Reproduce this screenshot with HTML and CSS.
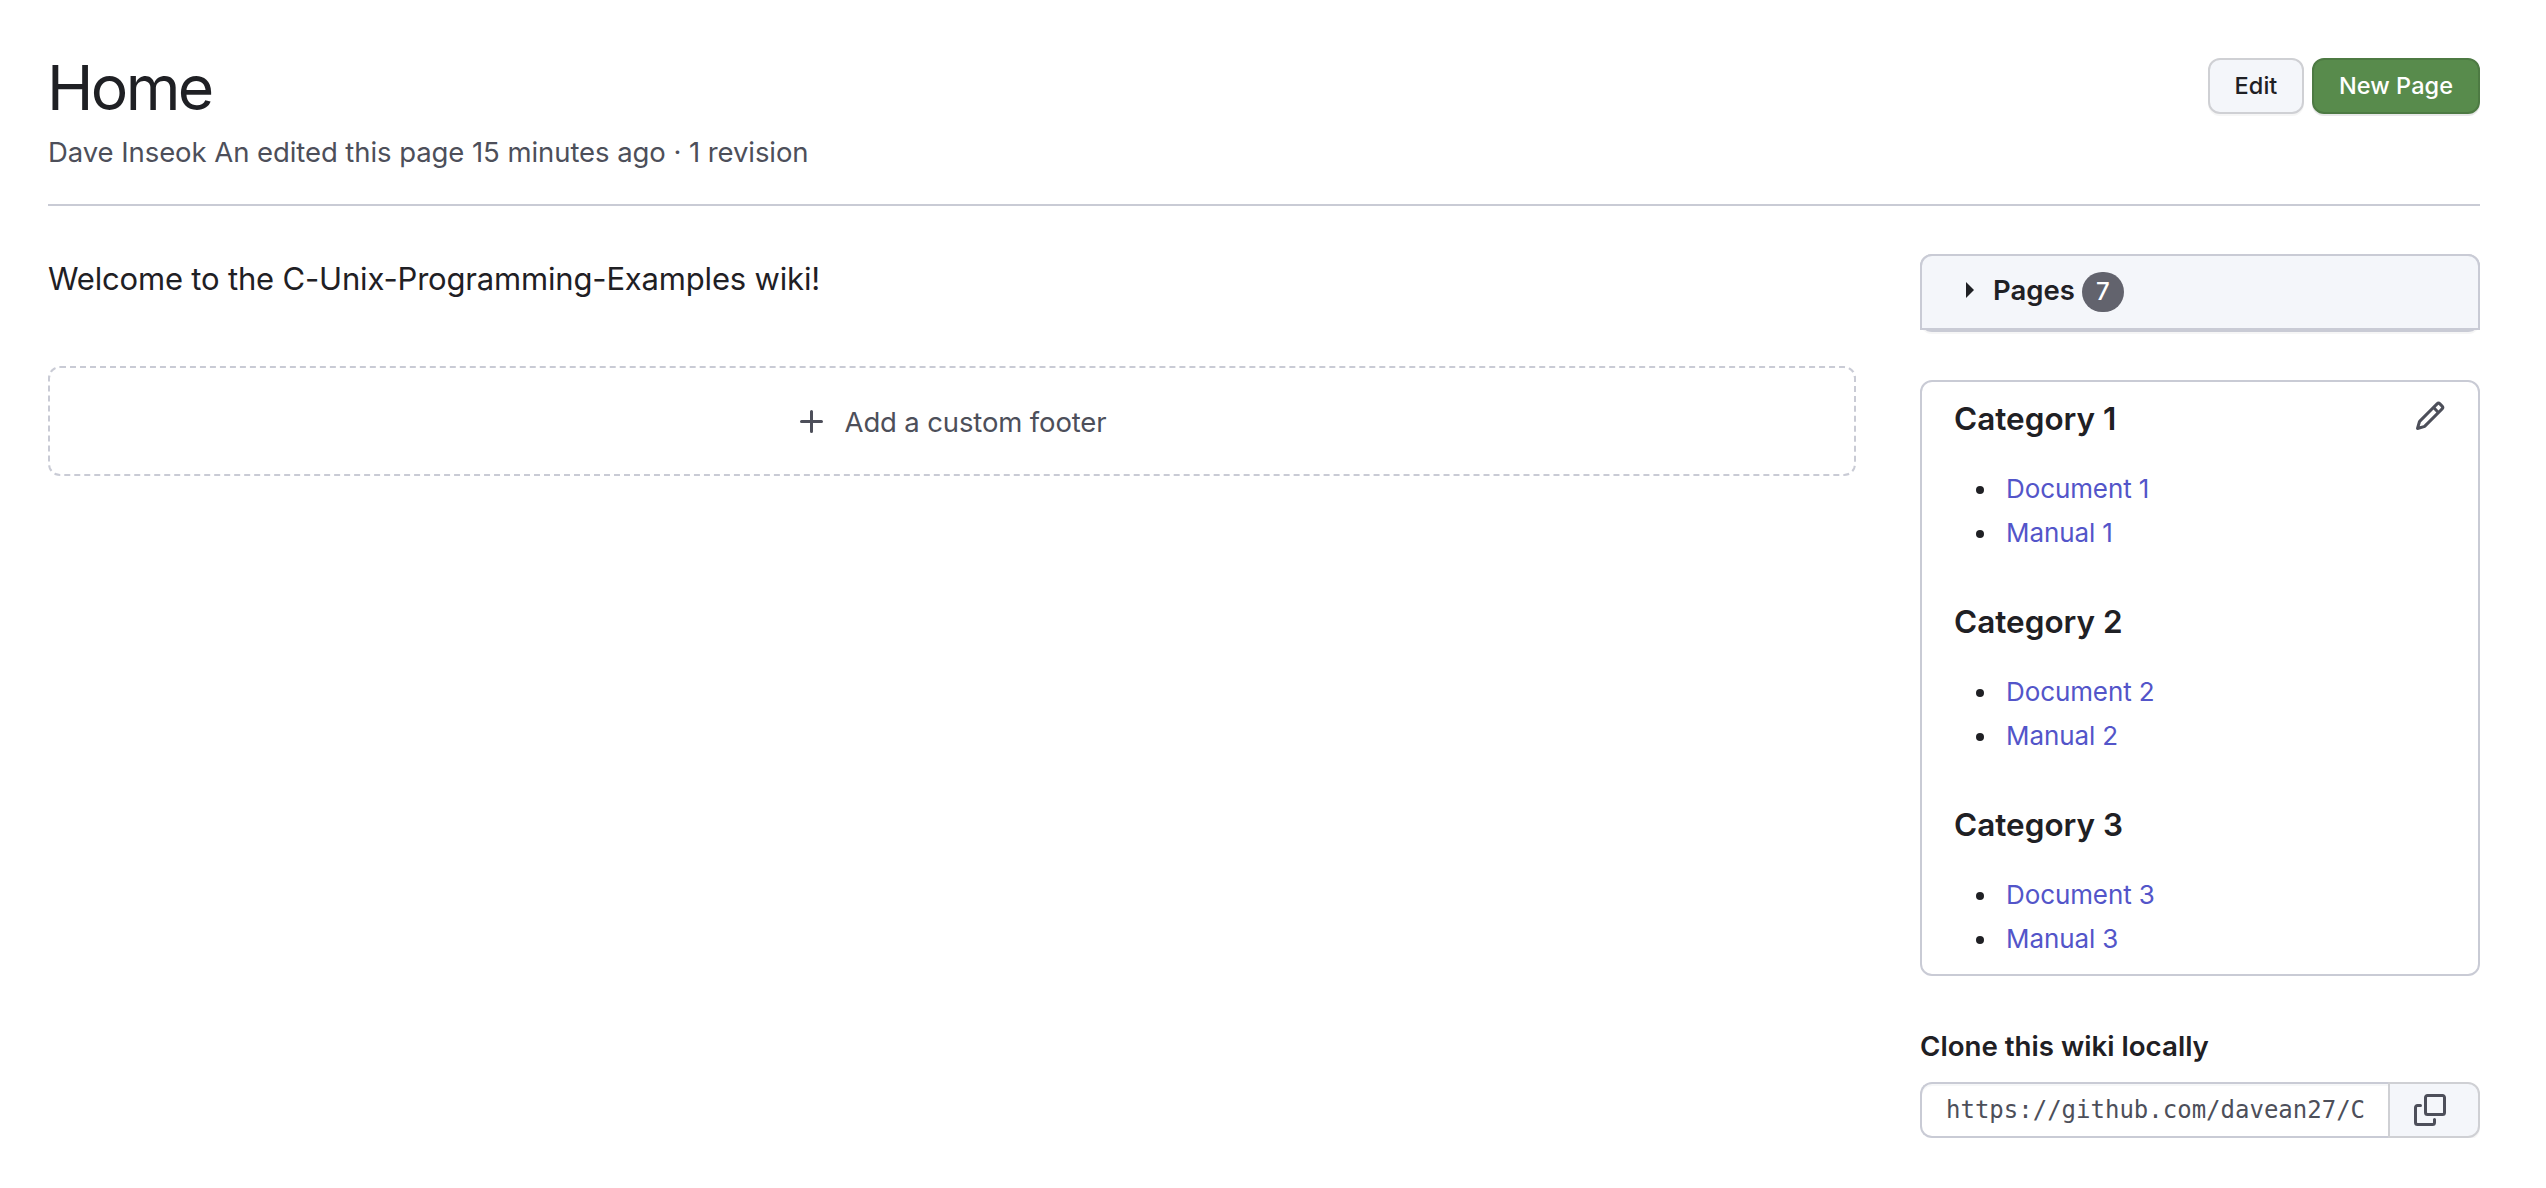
FILE: index.html
```
<!DOCTYPE html>
<html lang="en">
<head>
    <meta charset="UTF-8">
    <meta name="viewport" content="width=device-width, initial-scale=1.0">
    <title>Home · C-Unix-Programming-Examples Wiki</title>
    <link rel="stylesheet" href="styles.css">
</head>
<body>
    <header class="page-header">
        <div>
            <h1>Home</h1>
            <p class="edited">Dave Inseok An edited this page 15 minutes ago · 1 revision</p>
        </div>
        <div class="actions">
            <button class="btn">Edit</button>
            <button class="btn btn-primary">New Page</button>
        </div>
    </header>
    <div class="layout">
        <main>
            <p class="welcome">Welcome to the C-Unix-Programming-Examples wiki!</p>
            <a class="add-footer" href="#">
                <svg class="icon" viewBox="0 0 16 16"><path d="M7.75 2a.75.75 0 0 1 .75.75V7h4.25a.75.75 0 0 1 0 1.5H8.5v4.25a.75.75 0 0 1-1.5 0V8.5H2.75a.75.75 0 0 1 0-1.5H7V2.75A.75.75 0 0 1 7.75 2Z"/></svg>
                <span>Add a custom footer</span>
            </a>
        </main>
        <aside>
            <div class="pages-box">
                <div class="pages-header">
                    <span class="caret"></span>
                    <span class="pages-title">Pages</span>
                    <span class="counter">7</span>
                </div>
            </div>
            <div class="custom-sidebar">
                <div class="categories">
                    <section>
                        <h3>Category 1</h3>
                        <ul>
                            <li><a href="#">Document 1</a></li>
                            <li><a href="#">Manual 1</a></li>
                        </ul>
                    </section>
                    <section>
                        <h3>Category 2</h3>
                        <ul>
                            <li><a href="#">Document 2</a></li>
                            <li><a href="#">Manual 2</a></li>
                        </ul>
                    </section>
                    <section>
                        <h3>Category 3</h3>
                        <ul>
                            <li><a href="#">Document 3</a></li>
                            <li><a href="#">Manual 3</a></li>
                        </ul>
                    </section>
                </div>
                <a class="edit-sidebar" href="#">
                    <svg class="icon" viewBox="0 0 16 16"><path d="M11.013 1.427a1.75 1.75 0 0 1 2.474 0l1.086 1.086a1.75 1.75 0 0 1 0 2.474l-8.61 8.61c-.21.21-.47.364-.756.445l-3.251.93a.75.75 0 0 1-.927-.928l.929-3.25c.081-.286.235-.547.445-.758l8.61-8.61Zm.176 4.823L9.75 4.81l-6.286 6.287a.253.253 0 0 0-.064.108l-.558 1.953 1.953-.558a.253.253 0 0 0 .108-.064Zm1.238-3.763a.25.25 0 0 0-.354 0L10.811 3.75l1.439 1.44 1.263-1.263a.25.25 0 0 0 0-.354Z"/></svg>
                </a>
            </div>
            <h5>Clone this wiki locally</h5>
            <div class="clone">
                <input type="text" value="https://github.com/davean27/C" readonly>
                <button class="copy">
                    <svg class="icon" viewBox="0 0 16 16"><path d="M0 6.75C0 5.784.784 5 1.75 5h1.5a.75.75 0 0 1 0 1.5h-1.5a.25.25 0 0 0-.25.25v7.5c0 .138.112.25.25.25h7.5a.25.25 0 0 0 .25-.25v-1.5a.75.75 0 0 1 1.5 0v1.5A1.75 1.75 0 0 1 9.25 16h-7.5A1.75 1.75 0 0 1 0 14.25Z"/><path d="M5 1.75C5 .784 5.784 0 6.75 0h7.5C15.216 0 16 .784 16 1.75v7.5A1.75 1.75 0 0 1 14.25 11h-7.5A1.75 1.75 0 0 1 5 9.25Zm1.75-.25a.25.25 0 0 0-.25.25v7.5c0 .138.112.25.25.25h7.5a.25.25 0 0 0 .25-.25v-7.5a.25.25 0 0 0-.25-.25Z"/></svg>
                </button>
            </div>
        </aside>
    </div>
</body>
</html>
```
FILE: styles.css
```
* {
    box-sizing: border-box;
}

body {
    margin: 0;
    padding: 48px 66px 0 48px;
    font-family: Inter, "Liberation Sans", sans-serif;
    background-color: #fff;
    color: #1f2024;
}

h1, h3, h5, p, ul {
    margin: 0;
    padding: 0;
}

a {
    text-decoration: none;
}

.icon {
    display: block;
    width: 32px;
    height: 32px;
    fill: #4d4f5a;
}

/* Header */
.page-header {
    display: flex;
    justify-content: space-between;
    align-items: flex-start;
    padding-bottom: 31px;
    border-bottom: 2px solid #c9cbd5;
}

h1 {
    font-size: 62.5px;
    font-weight: 400;
    line-height: 79px;
    letter-spacing: -2.6px;
    text-indent: -1px;
}

.edited {
    margin-top: 4px;
    font-size: 27.5px;
    line-height: 42px;
    letter-spacing: -0.07px;
    color: #4d4f5a;
}

.actions {
    display: flex;
    gap: 8px;
    margin-top: 10px;
}

.btn {
    width: 96px;
    height: 56px;
    padding: 0 0 2px;
    font-family: inherit;
    font-size: 23.5px;
    font-weight: 550;
    letter-spacing: 0.05px;
    color: #1f2024;
    background-color: #f4f6fa;
    border: 2px solid #cfd0d4;
    border-radius: 12px;
    box-shadow: 0 2px 0 rgba(27, 31, 36, 0.04);
}

.btn-primary {
    width: 168px;
    color: #fff;
    background-color: #588b4c;
    border-color: #4d7a43;
    box-shadow: 0 2px 0 rgba(27, 31, 36, 0.1);
}

/* Content */
.layout {
    display: grid;
    grid-template-columns: 1fr 560px;
    gap: 64px;
    margin-top: 48px;
}

.welcome {
    font-size: 31px;
    line-height: 50px;
    letter-spacing: -0.18px;
}

.add-footer {
    display: flex;
    justify-content: center;
    align-items: center;
    gap: 17px;
    height: 110px;
    margin-top: 62px;
    padding: 2px 2px 0 0;
    font-size: 27.5px;
    letter-spacing: -0.14px;
    color: #4d4f5a;
    border: 2px dashed #c9cbd5;
    border-radius: 12px;
}

/* Sidebar */
.pages-box {
    height: 78px;
    border: 2px solid #c9cbd5;
    border-radius: 12px;
    box-shadow: 0 2px 0 rgba(27, 31, 36, 0.04);
}

.pages-header {
    display: flex;
    align-items: center;
    height: 76px;
    margin: -2px -2px 0;
    padding-left: 44px;
    background-color: #f4f6fa;
    border: 2px solid #c9cbd5;
    border-radius: 12px 12px 0 0;
}

.caret {
    margin-bottom: 4px;
    border: 8px solid transparent;
    border-left-color: #1f2024;
    border-right: 0;
}

.pages-title {
    margin: 0 7px 4px 19px;
    font-size: 27.5px;
    font-weight: 600;
}

.counter {
    width: 42px;
    height: 40px;
    font-size: 24px;
    font-weight: 550;
    line-height: 39px;
    text-align: center;
    color: #fff;
    background-color: #62636d;
    border-radius: 20px;
}

.custom-sidebar {
    display: flex;
    justify-content: space-between;
    margin-top: 48px;
    padding: 16px 32px;
    border: 2px solid #c9cbd5;
    border-radius: 12px;
}

.categories {
    display: grid;
    gap: 49px;
}

.edit-sidebar {
    margin-top: 2px;
}

h3 {
    font-size: 31.5px;
    font-weight: 600;
    line-height: 41px;
}

ul {
    display: grid;
    gap: 5px;
    margin-top: 30px;
    padding-left: 22px;
    list-style: none;
}

li {
    display: flex;
    align-items: center;
    gap: 22px;
    font-size: 26px;
    line-height: 39px;
    letter-spacing: -0.1px;
}

li::before {
    content: "";
    width: 8px;
    height: 8px;
    margin-top: 3px;
    border-radius: 50%;
    background-color: #1f2024;
}

li a {
    color: #5355c9;
}

h5 {
    margin: 49px 0 15px;
    font-size: 27.7px;
    font-weight: 600;
    line-height: 42px;
}

.clone {
    display: flex;
    height: 56px;
}

.clone input {
    flex: 1;
    min-width: 0;
    padding: 0 21px 0 24px;
    font-family: "DejaVu Sans Mono", monospace;
    font-size: 24px;
    color: #4d4f5a;
    border: 2px solid #c9cbd5;
    border-right: 0;
    border-radius: 12px 0 0 12px;
    box-shadow: inset 0 2px 0 rgba(208, 215, 222, 0.2);
}

.copy {
    width: 92px;
    padding: 0 0 0 24px;
    background-color: #f4f6fa;
    border: 2px solid #cfd0d4;
    border-radius: 0 12px 12px 0;
    box-shadow: 0 2px 0 rgba(27, 31, 36, 0.04);
}
```
